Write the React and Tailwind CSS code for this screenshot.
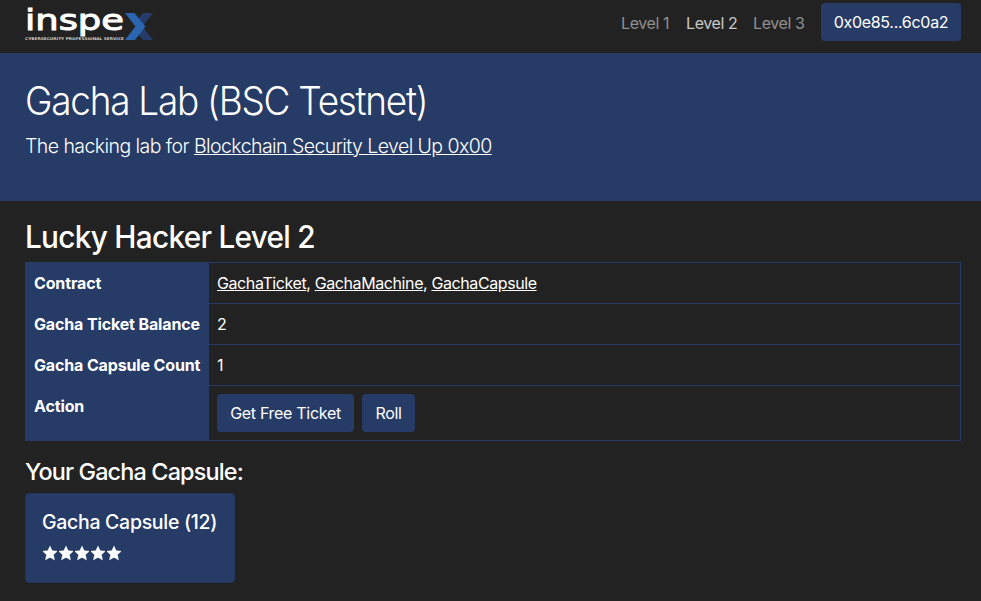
function Logo() {
  return (
    <svg width="129" height="34" viewBox="0 0 129 34" className="block overflow-visible" aria-label="inspex">
      <text x="0" y="22.600" fontSize="29" fill="#fff" stroke="#fff" strokeWidth="1" textLength="99" lengthAdjust="spacingAndGlyphs" fontFamily="'DejaVu Sans', sans-serif">inspe</text>
      <text x="0" y="32.600" fontSize="3.700" fontWeight="700" fill="#d0d0d0" textLength="99" lengthAdjust="spacingAndGlyphs" fontFamily="'DejaVu Sans', sans-serif">CYBERSECURITY PROFESSIONAL SERVICE</text>
      <path d="M128 6H118L110 15.500L117 19.500L110 24L118 33H128L117.500 19.500Z" fill="#263b69" />
      <path d="M100 6H109.500L120.500 19.500L110 33H100L110.500 19.500Z" fill="#2b65b0" />
    </svg>
  );
}

function Star() {
  return (
    <svg width="14" height="14" viewBox="0 0 16 16" fill="#fff" stroke="#fff" strokeWidth="0.8" strokeLinejoin="round" className="block overflow-visible">
      <path d="M8 .4 10.300 5.500 16 6.100 11.800 10 13 15.600 8 12.800 3 15.600 4.200 10 0 6.100 5.700 5.500Z" />
    </svg>
  );
}

function Row({ label, last, children }) {
  return (
    <tr>
      <th className={`bg-[#263b66] pt-[9px] pl-[9px] text-left align-top font-bold whitespace-nowrap ${last ? "h-[56px]" : "h-[41px]"}`}>
        <span className="tracking-[-0.14px]">{label}</span>
      </th>
      <td className={`border-t border-r border-[#263b66] pt-2 pl-2 align-top tracking-[-0.4px] ${last ? "border-b" : ""}`}>{children}</td>
    </tr>
  );
}

function Button({ children, className = "" }) {
  return (
    <button className={`h-[38px] shrink-0 rounded bg-[#263b66] text-center tracking-[-0.3px] whitespace-nowrap ${className}`}>
      {children}
    </button>
  );
}

export default function App() {
  return (
    <div className="h-[601px] overflow-hidden bg-[#222] font-['Inter',sans-serif] text-base leading-6 text-white">
      <nav className="flex h-[53px] items-start justify-between pr-5 pl-[25px]">
        <div className="pt-[7px]"><Logo /></div>
        <div className="flex pt-[3px]">
          <div className="flex gap-4 pt-[8px] pr-4 whitespace-nowrap text-[#909090]">
            <a className="w-[49px] tracking-[-0.4px]">Level 1</a>
            <a className="w-[51px] tracking-[-0.4px] text-[#c8c8c8]">Level 2</a>
            <a className="w-[52px] tracking-[-0.4px]">Level 3</a>
          </div>
          <Button className="w-[140px]">0x0e85...6c0a2</Button>
        </div>
      </nav>
      <header className="h-[148px] bg-[#263b66] px-[25px] pt-6">
        <h1 className="mb-2 origin-left scale-x-[0.947] text-[39px] leading-[48px] font-light tracking-[-1.32px] whitespace-nowrap">Gacha Lab (BSC Testnet)</h1>
        <p className="text-[19.5px] leading-[26px] font-light tracking-[-0.56px] whitespace-nowrap">
          The hacking lab for <a className="underline">Blockchain Security Level Up 0x00</a>
        </p>
      </header>
      <main className="pt-[17px] pr-5 pl-[25px]">
        <h2 className="h-[44px] origin-left scale-x-[0.96] text-[31px] leading-[38px] font-medium tracking-[-0.75px]">Lucky Hacker Level 2</h2>
        <table className="w-full table-fixed border-separate border-spacing-0">
          <colgroup><col className="w-[184px]" /><col /></colgroup>
          <tbody>
            <Row label="Contract">
              <a className="underline">GachaTicket</a>, <a className="underline">GachaMachine</a>, <a className="underline">GachaCapsule</a>
            </Row>
            <Row label="Gacha Ticket Balance">2</Row>
            <Row label="Gacha Capsule Count">1</Row>
            <Row label="Action" last>
              <div className="flex gap-2">
                <Button className="w-[137px]">Get Free Ticket</Button>
                <Button className="w-[53px]">Roll</Button>
              </div>
            </Row>
          </tbody>
        </table>
        <h4 className="mt-4 mb-[7px] text-[23.4px] leading-[29px] font-medium tracking-[-0.84px]">Your Gacha Capsule:</h4>
        <section className="h-[90px] w-[210px] rounded border border-[#21355e] bg-[#263b66] p-4">
          <h5 className="text-[19.5px] leading-6 font-medium tracking-[-0.3px] whitespace-nowrap">Gacha Capsule (12)</h5>
          <div className="ml-px flex gap-0.5 pt-[12px]"><Star /><Star /><Star /><Star /><Star /></div>
        </section>
      </main>
    </div>
  );
}
